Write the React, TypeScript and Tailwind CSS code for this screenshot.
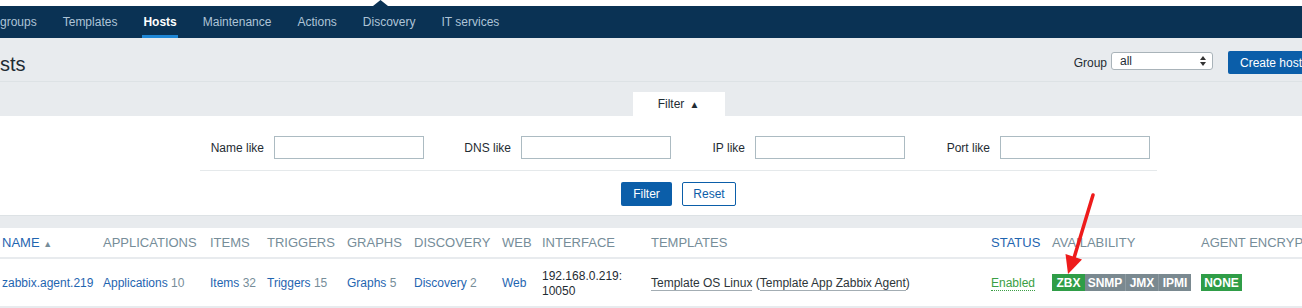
import React from "react";

const navItems = ["groups", "Templates", "Hosts", "Maintenance", "Actions", "Discovery", "IT services"];

const cols = [
  { w: "w-[103px] shrink-0 pl-[2px]" },
  { w: "w-[107px] shrink-0" },
  { w: "w-[57px] shrink-0" },
  { w: "w-[80px] shrink-0" },
  { w: "w-[67px] shrink-0" },
  { w: "w-[88px] shrink-0" },
  { w: "w-[40px] shrink-0" },
  { w: "w-[109px] shrink-0" },
  { w: "w-[340px] shrink-0" },
  { w: "w-[61px] shrink-0" },
  { w: "w-[149px] shrink-0" },
  { w: "w-[160px] shrink-0" },
];

const headers = [
  "APPLICATIONS",
  "ITEMS",
  "TRIGGERS",
  "GRAPHS",
  "DISCOVERY",
  "WEB",
  "INTERFACE",
  "TEMPLATES",
];

function LinkCount({ label, count }: { label: string; count: string }) {
  return (
    <span>
      <span className="text-[#1f65b0]">{label}</span>{" "}
      <span className="text-[#768d99]">{count}</span>
    </span>
  );
}

function FilterField({ label, labelW }: { label: string; labelW: string }) {
  return (
    <div className="flex items-center">
      <span className={`${labelW} text-right`}>{label}</span>
      <input className="ml-[10px] h-[23px] w-[150px] border border-[#acbbc2] bg-white" />
    </div>
  );
}

export default function App() {
  return (
    <div className="relative h-[308px] w-[1302px] overflow-hidden bg-white font-['Liberation_Sans',Arial,sans-serif] text-[12px] text-[#1f2c33]">
      {/* top strip with menu caret */}
      <div className="relative h-[6px] bg-white">
        <svg className="absolute left-[373px] top-0" width="15" height="6" viewBox="0 0 15 6">
          <polygon points="0,6 7.5,0 15,6" fill="#0a3254" />
        </svg>
      </div>

      <nav className="flex h-[32px] gap-[26px] bg-[#0a3254] text-[12px]">
        {navItems.map((n) =>
          n === "Hosts" ? (
            <span
              key={n}
              className="-mx-px flex items-center px-px font-bold text-white shadow-[inset_0_-3px_0_#1f87d6]"
            >
              {n}
            </span>
          ) : (
            <span key={n} className="flex items-center text-[#aec4d7]">
              {n}
            </span>
          )
        )}
      </nav>

      <div className="flex h-[44px] w-[1314px] items-center border-b border-[#dde2e5] bg-[#e8ebee] pt-[6px]">
        <h1 className="mt-[3px] text-[20px] leading-none">sts</h1>
        <div className="ml-auto flex items-center">
          <span>Group</span>
          <div className="ml-[4px] mb-[3px] flex h-[18px] w-[102px] items-center justify-between rounded-[3px] border border-[#a9b3b9] bg-white pl-[8px] pr-[6px]">
            <span>all</span>
            <svg width="6" height="10" viewBox="0 0 6 10">
              <polygon points="0,4 3,0 6,4" fill="#333" />
              <polygon points="0,6 3,10 6,6" fill="#333" />
            </svg>
          </div>
          <button className="ml-[15px] h-[23px] w-[86px] rounded-[2px] bg-[#0b5ea9] text-left pl-[12px] text-white">
            Create host
          </button>
        </div>
      </div>

      <div className="h-[34px] bg-[#e8ebee]">
        <div className="ml-[200px] flex h-full w-[957px] items-end justify-center">
          <div className="flex h-[24px] w-[92px] items-center justify-center gap-[5px] bg-white">
            <span>Filter</span>
            <span className="text-[10px]">▲</span>
          </div>
        </div>
      </div>

      <div className="border-b border-[#dde2e5] bg-white">
        <div className="ml-[200px] w-[957px]">
          <div className="flex border-b border-[#e5e9eb] pt-[20px] pb-[11px]">
            <FilterField label="Name like" labelW="w-[64px]" />
            <FilterField label="DNS like" labelW="w-[87px]" />
            <FilterField label="IP like" labelW="w-[74px]" />
            <FilterField label="Port like" labelW="w-[85px]" />
          </div>
          <div className="flex justify-center gap-[10px] pt-[11px] pb-[9px]">
            <button className="h-[24px] w-[51px] rounded-[2px] bg-[#0b5ea9] text-white">Filter</button>
            <button className="h-[24px] w-[54px] rounded-[2px] border border-[#0b5ea9] bg-white text-[#0b5ea9]">
              Reset
            </button>
          </div>
        </div>
      </div>

      <div className="h-[12px] bg-[#e8ebee]" />

      {/* table header */}
      <div className="flex h-[31px] items-center whitespace-nowrap border-b-2 border-[#e8ebee] text-[13px] text-[#768d99]">
        <div className={cols[0].w}>
          <span className="text-[#1f65b0]">NAME</span>{" "}
          <span className="text-[9px] text-[#768d99]">▲</span>
        </div>
        {headers.map((h, i) => (
          <div key={h} className={cols[i + 1].w}>
            {h}
          </div>
        ))}
        <div className={`${cols[9].w} text-[#1f65b0]`}>STATUS</div>
        <div className={cols[10].w}>AVAILABILITY</div>
        <div className={cols[11].w}>AGENT ENCRYPTION</div>
      </div>

      {/* data row */}
      <div className="flex h-[49px] items-center whitespace-nowrap border-b-2 border-[#e8ebee]">
        <div className={`${cols[0].w} text-[#1f65b0]`}>zabbix.agent.219</div>
        <div className={cols[1].w}>
          <LinkCount label="Applications" count="10" />
        </div>
        <div className={cols[2].w}>
          <LinkCount label="Items" count="32" />
        </div>
        <div className={cols[3].w}>
          <LinkCount label="Triggers" count="15" />
        </div>
        <div className={cols[4].w}>
          <LinkCount label="Graphs" count="5" />
        </div>
        <div className={cols[5].w}>
          <LinkCount label="Discovery" count="2" />
        </div>
        <div className={`${cols[6].w} text-[#1f65b0]`}>Web</div>
        <div className={`${cols[7].w} mt-[3px] leading-[15px]`}>
          192.168.0.219:
          <br />
          10050
        </div>
        <div className={`${cols[8].w} text-[#2d3539]`}>
          <span className="border-b border-[#a3adb3]">Template OS Linux</span> (
          <span className="border-b border-[#a3adb3]">Template App Zabbix Agent</span>)
        </div>
        <div className={cols[9].w}>
          <span className="border-b border-dotted border-[#3a9e44] text-[#3a9e44]">Enabled</span>
        </div>
        <div className={`${cols[10].w} flex`}>
          <span className="flex h-[17px] w-[33px] items-center justify-center bg-[#2f9d47] font-bold text-white">
            ZBX
          </span>
          <span className="flex h-[17px] w-[40px] items-center justify-center bg-[#7a8990] font-bold text-white">
            SNMP
          </span>
          <span className="flex h-[17px] w-[33px] items-center justify-center border-l border-[#8e9ba2] bg-[#7a8990] font-bold text-white">
            JMX
          </span>
          <span className="flex h-[17px] w-[33px] items-center justify-center border-l border-[#8e9ba2] bg-[#7a8990] font-bold text-white">
            IPMI
          </span>
        </div>
        <div className={`${cols[11].w} flex`}>
          <span className="flex h-[17px] w-[41px] items-center justify-center bg-[#2f9d47] font-bold text-white">
            NONE
          </span>
        </div>
      </div>

      {/* red annotation arrow */}
      <svg className="absolute left-[1050px] top-[188px]" width="50" height="92" viewBox="0 0 50 92">
        <line x1="43" y1="7" x2="24" y2="70" stroke="#ee1b1b" strokeWidth="3.5" strokeLinecap="round" />
        <polygon points="15.5,66 32,71.5 18,86" fill="#ee1b1b" />
      </svg>
    </div>
  );
}
